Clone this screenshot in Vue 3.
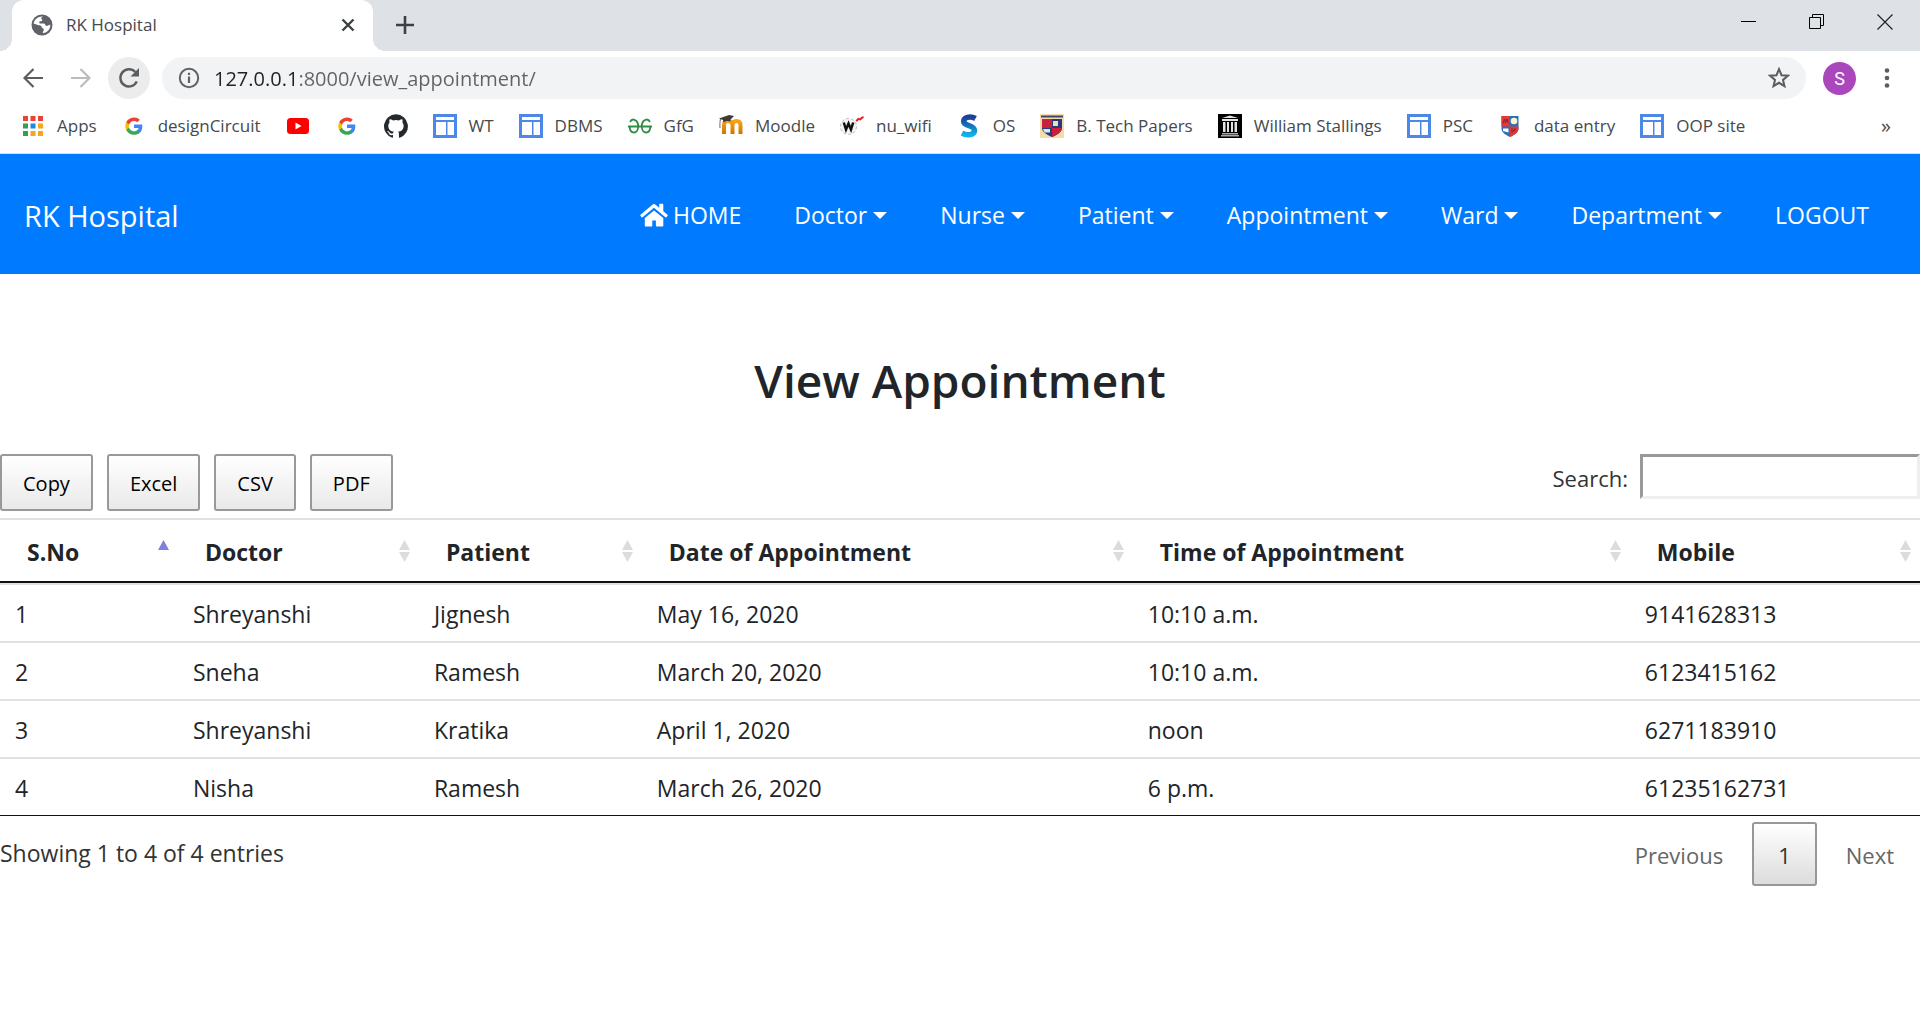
<script setup>
import { ref } from 'vue'

const address = ref('127.0.0.1:8000/view_appointment/')
const query = ref('')

const bookmarks = [
  { icon: 'apps', label: 'Apps' },
  { icon: 'google', label: 'designCircuit' },
  { icon: 'youtube', label: '', title: 'YouTube' },
  { icon: 'google', label: '', title: 'Google' },
  { icon: 'github', label: '', title: 'GitHub' },
  { icon: 'site', label: 'WT' },
  { icon: 'site', label: 'DBMS' },
  { icon: 'gfg', label: 'GfG' },
  { icon: 'moodle', label: 'Moodle' },
  { icon: 'wifi', label: 'nu_wifi' },
  { icon: 'snake', label: 'OS' },
  { icon: 'crest', label: 'B. Tech Papers' },
  { icon: 'archive', label: 'William Stallings' },
  { icon: 'site', label: 'PSC' },
  { icon: 'shield', label: 'data entry' },
  { icon: 'site', label: 'OOP site' },
]

const menus = ['Doctor', 'Nurse', 'Patient', 'Appointment', 'Ward', 'Department']
const exportsList = ['Copy', 'Excel', 'CSV', 'PDF']
const columns = ['S.No', 'Doctor', 'Patient', 'Date of Appointment', 'Time of Appointment', 'Mobile']
const rows = [
  ['1', 'Shreyanshi', 'Jignesh', 'May 16, 2020', '10:10 a.m.', '9141628313'],
  ['2', 'Sneha', 'Ramesh', 'March 20, 2020', '10:10 a.m.', '6123415162'],
  ['3', 'Shreyanshi', 'Kratika', 'April 1, 2020', 'noon', '6271183910'],
  ['4', 'Nisha', 'Ramesh', 'March 26, 2020', '6 p.m.', '61235162731'],
]
</script>

<template>
  <div class="window">
    <svg class="sprite" aria-hidden="true">
      <defs>
        <linearGradient id="snakeFill" x1="0" y1="0" x2="0" y2="1">
          <stop offset="0" stop-color="#1d3f97" />
          <stop offset="0.5" stop-color="#1474bd" />
          <stop offset="1" stop-color="#10b4ea" />
        </linearGradient>
        <linearGradient id="moodleFill" x1="0" y1="0" x2="0" y2="1">
          <stop offset="0" stop-color="#f9a11b" />
          <stop offset="1" stop-color="#c9780a" />
        </linearGradient>
      </defs>
      <symbol id="apps" viewBox="0 0 24 24">
        <path fill="#ea4335" d="M2 2h5v5H2zM9.500 2h5v5h-5zM17 2h5v5h-5z" />
        <path fill="#34a04f" d="M2 9.500h5v5H2zM2 17h5v5H2z" />
        <path fill="#1e88e5" d="M9.500 9.500h5v5h-5z" />
        <path fill="#f4a71d" d="M17 9.500h5v5h-5zM9.500 17h5v5h-5zM17 17h5v5h-5z" />
      </symbol>
      <symbol id="google" viewBox="0 0 24 24">
        <g transform="translate(2.500 2.700) scale(.79)">
          <path fill="#4285f4" d="M22.560 12.250c0-.78-.07-1.530-.2-2.250H12v4.260h5.920a5.060 5.060 0 0 1-2.200 3.320v2.770h3.570c2.080-1.920 3.270-4.740 3.270-8.100z" />
          <path fill="#34a853" d="M12 23c2.970 0 5.460-.98 7.280-2.660l-3.570-2.770c-.98.66-2.230 1.060-3.710 1.060-2.860 0-5.290-1.930-6.160-4.530H2.180v2.840A11 11 0 0 0 12 23z" />
          <path fill="#fbbc05" d="M5.840 14.090a6.600 6.600 0 0 1 0-4.180V7.070H2.180a11 11 0 0 0 0 9.860l3.660-2.840z" />
          <path fill="#ea4335" d="M12 5.380c1.620 0 3.060.56 4.210 1.640l3.150-3.150A11 11 0 0 0 2.180 7.070l3.660 2.840C6.710 7.310 9.140 5.380 12 5.380z" />
        </g>
      </symbol>
      <symbol id="youtube" viewBox="0 0 24 24">
        <rect x="1" y="4" width="22" height="16" rx="3.500" fill="#f00" />
        <path fill="#fff" d="M9.500 8.600v6.800l6-3.400z" />
      </symbol>
      <symbol id="github" viewBox="0 0 24 24">
        <path fill="#24292e" d="M12 .3a12 12 0 0 0-3.800 23.380c.6.120.83-.26.83-.57L9 21.070c-3.340.72-4.040-1.610-4.040-1.610-.55-1.390-1.340-1.760-1.340-1.760-1.080-.74.090-.73.090-.73 1.200.09 1.830 1.240 1.830 1.240 1.080 1.830 2.810 1.300 3.500 1 .1-.78.420-1.310.76-1.610-2.670-.3-5.470-1.330-5.470-5.930 0-1.310.47-2.380 1.240-3.220-.14-.3-.54-1.520.1-3.180 0 0 1-.32 3.300 1.230a11.500 11.500 0 0 1 6 0c2.280-1.550 3.290-1.230 3.290-1.230.64 1.660.24 2.880.12 3.180a4.650 4.650 0 0 1 1.230 3.220c0 4.610-2.800 5.630-5.480 5.920.42.36.81 1.100.81 2.220l-.01 3.290c0 .31.2.69.82.57A12 12 0 0 0 12 .3" />
      </symbol>
      <symbol id="site" viewBox="0 0 24 24">
        <path fill="#4d87e8" d="M0 0h24v24H0z" />
        <path fill="#fff" d="M3 3h18v3H3zM3 8h10v13H3zM14.500 8H21v13h-6.500z" />
      </symbol>
      <symbol id="gfg" viewBox="0 0 24 24">
        <path fill="none" stroke="#2f8d46" stroke-width="1.800" d="M0 12.500h24M2 8c1-2 3-2.800 4.500-2.200 2.500.8 3.700 3.500 3.700 6.500 0 3.500-1.700 6.200-4.300 6.200S1.800 16.500 1.700 12.500M22 8c-1-2-3-2.800-4.500-2.200-2.500.8-3.700 3.500-3.700 6.500 0 3.500 1.700 6.200 4.300 6.200s4.100-2 4.200-6" />
      </symbol>
      <symbol id="moodle" viewBox="0 0 24 24">
        <path fill="none" stroke="url(#moodleFill)" stroke-width="4" d="M5 20V11c0-3 1.500-4 4-4s4.500 1 4.500 4v9M13.500 20V11c0-3 2-4 4-4s4 1 4 4v9" />
        <path fill="#3b3b3b" d="M0 4.500 10 1l5 1-3.500 3.500v2C9 6.500 6 7 4.500 8.500L4 6z" />
        <path fill="none" stroke="#666" d="M1.500 5C.8 8 .8 11 1 14" />
      </symbol>
      <symbol id="wifi" viewBox="0 0 24 24">
        <circle cx="8.500" cy="12.500" r="8" fill="#f4f4f4" stroke="#bbb" stroke-dasharray="3 2" />
        <path fill="none" stroke="#111" stroke-width="2.500" d="m3.800 8.500 2.200 7 2.500-6 2.500 6 2.200-7" />
        <path fill="#e02b2b" d="m15.500 6.500 2.500-2.800 1.500.5L23 2l1 1.500-3.500 3-1.800-.5-1.700 2z" />
      </symbol>
      <symbol id="snake" viewBox="0 0 24 24">
        <path fill="none" stroke="url(#snakeFill)" stroke-width="5.500" d="M18.500 4.500C13 1.500 6.500 3.500 6.700 7.500c.2 5 10.800 3.200 10.800 9 0 4.500-7.500 5.500-12.500 2.700" />
      </symbol>
      <symbol id="crest" viewBox="0 0 24 24">
        <path fill="#f3dcae" d="M0 0h24v24H0z" />
        <path fill="#44446b" d="M1 1.500h22v2H1z" />
        <path fill="#283a7c" d="M2 5h20v9c0 4-5 7-10 9-5-2-10-5-10-9z" />
        <path fill="#c9203b" d="M2 5h10v9H2zM12 14h10c0 4-5 7-10 9z" />
        <path fill="#f5dfa3" d="M13 7h5v5h-5z" />
        <path fill="#dce7f5" d="M3 15h7v3.500H4.500z" />
      </symbol>
      <symbol id="archive" viewBox="0 0 24 24">
        <path d="M0 0h24v24H0z" />
        <path fill="#e4e4e4" d="m12 1.500 8 2.500H4zM4 5h16v2H4zM5 8h2.500v10H5zM9 8h2v10H9zM13 8h2v10h-2zM16.500 8H19v10h-2.500z" />
        <path fill="#aaa" d="M4 19h16v1.500H4zM3 21h18v1.500H3z" />
      </symbol>
      <symbol id="shield" viewBox="0 0 24 24">
        <path fill="#2c6fb8" d="M3.500 2h17v13c0 3-4 6-8.500 8-4.500-2-8.500-5-8.500-8z" />
        <path fill="#e23a36" d="M3.500 2H12v10.500H3.500zM12 12.500h8.500V15c0 3-4 6-8.500 8z" />
        <circle cx="16" cy="7" r="3.300" fill="#fbf3d0" />
        <path fill="#fff" d="M5 14.500h5.500v4L5 17z" />
        <path fill="none" stroke="#812832" d="M5 9.500 6.500 5l1 4L9 5l1.500 4.500M14 14v4.500l3-4v3" />
      </symbol>
    </svg>

    <header class="browser">
      <div class="tabstrip">
        <div class="tab">
          <svg class="favicon" viewBox="0 0 22 22" aria-hidden="true">
            <circle cx="11" cy="11" r="10.500" fill="#5f6368" />
            <path fill="#fff" d="M12 2.500c-2 1-2.300 2-1 3 .8.800-.2 2-1.700 1.800-1.300-.2-1.200 1.400-.6 2.200h4.300c1.500 0 1 2.500 2.600 2.500 1.500 0 1.300-1.300 3.700-1.300.3 4-2.700 7.700-7.300 8.500-.8-1.200 1-2 .8-3.700-.1-1.200-2-1-2.200-2.500-.1-1.300-1.200-1.800-3-1.800L2.600 9.500C3.400 5.300 7.500 2 12 2.500z" />
          </svg>
          <span class="tab-title">RK Hospital</span>
          <button class="plain" type="button" aria-label="Close tab">
            <svg width="14" height="14" viewBox="0 0 14 14"><path d="m1.500 1.500 11 11m0-11-11 11" fill="none" stroke="#3c4043" stroke-width="2.400" /></svg>
          </button>
        </div>
        <button class="plain new-tab" type="button" aria-label="New tab">
          <svg width="18" height="18" viewBox="0 0 18 18"><path d="M9 0v18M0 9h18" stroke="#3c4043" stroke-width="2.600" /></svg>
        </button>
        <div class="window-controls">
          <button class="plain" type="button" aria-label="Minimize">
            <svg width="16" height="16" viewBox="0 0 16 16"><path d="M0 7.500h15" stroke="#000" /></svg>
          </button>
          <button class="plain" type="button" aria-label="Restore">
            <svg width="16" height="16" viewBox="0 0 16 16"><path d="M.5 3.500h11v11H.5zM3.500 3.500v-3h11v11h-3" fill="none" stroke="#000" /></svg>
          </button>
          <button class="plain" type="button" aria-label="Close window">
            <svg width="16" height="16" viewBox="0 0 16 16"><path d="m.5.5 15 15m0-15-15 15" stroke="#222" stroke-width="1.200" /></svg>
          </button>
        </div>
      </div>

      <div class="toolbar">
        <button class="plain round" type="button" aria-label="Back">
          <svg width="20" height="20" viewBox="0 0 20 20"><path d="M20 10H2M10.500 1 1.500 10l9 9" fill="none" stroke="#5a5d61" stroke-width="2.200" /></svg>
        </button>
        <button class="plain round" type="button" aria-label="Forward">
          <svg width="20" height="20" viewBox="0 0 20 20"><path d="M0 10h18M9.500 1l9 9-9 9" fill="none" stroke="#bbbcbe" stroke-width="2.200" /></svg>
        </button>
        <button class="plain round shaded" type="button" aria-label="Reload">
          <svg width="22" height="22" viewBox="0 0 22 22"><path d="M18.800 14.500A8.600 8.600 0 1 1 17.300 5" fill="none" stroke="#5a5d61" stroke-width="2.400" /><path d="M21 1v8.500h-8.500z" fill="#5a5d61" /></svg>
        </button>
        <div class="omnibox">
          <svg width="22" height="22" viewBox="0 0 22 22" aria-hidden="true"><circle cx="11" cy="11" r="9.200" fill="none" stroke="#5f6368" stroke-width="2" /><path d="M11 9.500v6.500M11 5.800v2.200" stroke="#5f6368" stroke-width="2.200" /></svg>
          <input v-model="address" class="address" type="text" aria-label="Address" />
          <button class="plain" type="button" aria-label="Bookmark this page">
            <svg width="22" height="22" viewBox="0 0 22 22"><path d="m11 2.200 2.500 6 6.400.5-4.900 4.200 1.500 6.300-5.500-3.400-5.500 3.400L7 12.900 2.100 8.700l6.400-.5z" fill="none" stroke="#5a5d61" stroke-width="2" /></svg>
          </button>
        </div>
        <button class="plain avatar" type="button" aria-label="Profile">S</button>
        <button class="plain more" type="button" aria-label="Menu">
          <svg width="6" height="20" viewBox="0 0 6 20"><g fill="#5a5d61"><circle cx="3" cy="2.500" r="2.300" /><circle cx="3" cy="10" r="2.300" /><circle cx="3" cy="17.500" r="2.300" /></g></svg>
        </button>
      </div>

      <nav class="bookmarks" aria-label="Bookmarks">
        <a v-for="(b, i) in bookmarks" :key="i" class="bookmark" href="#" :title="b.title">
          <svg class="bookmark-icon" aria-hidden="true"><use :href="'#' + b.icon" /></svg>
          <span v-if="b.label" class="bookmark-label">{{ b.label }}</span>
        </a>
        <button class="plain overflow" type="button" aria-label="More bookmarks">»</button>
      </nav>
    </header>

    <nav class="navbar">
      <a class="brand" href="#">RK Hospital</a>
      <div class="menu">
        <a class="menu-link home" href="#">
          <svg width="28" height="24" viewBox="0 0 28 24" aria-hidden="true">
            <path fill="#fff" d="M14 7.400 4.800 15v7.400c0 .6.400 1 1 1H11.500c.5 0 .8-.4.800-.9v-5h3.600v5c0 .5.300.9.800.9h5.600c.6 0 1-.4 1-1V15z" />
            <path fill="#fff" d="M27.500 11.700 23.300 8.200V1.500c0-.4-.3-.7-.7-.7h-2.700c-.4 0-.7.3-.7.700v3.300L15.600 1.700a2.500 2.500 0 0 0-3.200 0L.5 11.700c-.3.200-.3.700-.1 1l1.200 1.500c.3.300.7.300 1 .1L13.400 5.300c.4-.3.800-.3 1.200 0l10.800 9c.3.200.7.200 1-.1l1.200-1.500c.2-.3.200-.8-.1-1z" />
          </svg>
          HOME
        </a>
        <a v-for="m in menus" :key="m" class="menu-link dropdown" href="#">{{ m }}</a>
        <a class="menu-link" href="#">LOGOUT</a>
      </div>
    </nav>

    <main>
      <h1>View Appointment</h1>

      <div class="table-tools">
        <div class="exports">
          <button v-for="e in exportsList" :key="e" class="export" type="button">{{ e }}</button>
        </div>
        <div class="search">
          <label for="search">Search:</label>
          <input id="search" v-model="query" type="search" />
        </div>
      </div>

      <table>
        <colgroup>
          <col v-for="(c, i) in columns" :key="c" :class="'col-' + i" />
        </colgroup>
        <thead>
          <tr>
            <th v-for="(c, i) in columns" :key="c" scope="col" :aria-sort="i ? 'none' : 'ascending'">
              <div class="heading">
                <span class="heading-text">{{ c }}</span>
                <svg v-if="i" width="11" height="22" viewBox="0 0 11 22" aria-hidden="true"><path d="M5.500 0 11 10H0zM0 12h11L5.500 22z" fill="#dcdcdc" /></svg>
                <svg v-else width="11" height="22" viewBox="0 0 11 22" aria-hidden="true"><path d="M5.500 0 11 10H0z" fill="#7f80dc" /></svg>
              </div>
            </th>
          </tr>
        </thead>
        <tbody>
          <tr v-for="r in rows" :key="r[0]">
            <td v-for="(v, i) in r" :key="i">{{ v }}</td>
          </tr>
        </tbody>
      </table>

      <div class="table-footer">
        <p>Showing 1 to 4 of 4 entries</p>
        <div class="pager">
          <button class="page" type="button">Previous</button>
          <button class="page current" type="button" aria-current="page">1</button>
          <button class="page" type="button">Next</button>
        </div>
      </div>
    </main>
  </div>
</template>

<style>
body {
  margin: 0;
  background: #fff;
}
</style>

<style scoped>
.window {
  font-family: "Open Sans", "Noto Sans", sans-serif;
  font-size: 23px;
  color: #212529;
}
* {
  box-sizing: border-box;
}
.sprite {
  position: absolute;
  width: 0;
  height: 0;
}
a {
  color: inherit;
  text-decoration: none;
}
button,
input {
  font: inherit;
  color: inherit;
}
.plain {
  display: flex;
  align-items: center;
  justify-content: center;
  padding: 0;
  border: 0;
  background: none;
}

/* Browser frame */
.browser {
  border-bottom: 1px solid #dadce0;
}
.tabstrip {
  display: flex;
  align-items: center;
  height: 51px;
  padding-left: 12px;
  background: #dee1e6;
}
.tab {
  position: relative;
  display: flex;
  align-items: center;
  align-self: stretch;
  width: 361px;
  padding: 0 18px 2px 19px;
  border-radius: 12px 12px 0 0;
  background: #fff;
}
.tab::before,
.tab::after {
  content: "";
  position: absolute;
  bottom: 0;
  width: 12px;
  height: 12px;
}
.tab::before {
  right: 100%;
  background: radial-gradient(circle at 0 0, transparent 12px, #fff 12px);
}
.tab::after {
  left: 100%;
  background: radial-gradient(circle at 100% 0, transparent 12px, #fff 12px);
}
.favicon {
  width: 22px;
  height: 22px;
  margin-right: 13px;
}
.tab-title {
  flex: 1;
  font-size: 17px;
  color: #45494d;
}
.new-tab {
  margin-left: 23px;
  padding-bottom: 2px;
}
.window-controls {
  display: flex;
  gap: 52px;
  margin-left: auto;
  padding: 0 27px 8px 0;
}
.toolbar {
  display: flex;
  align-items: center;
  height: 54px;
  padding: 0 30px 0 12px;
}
.round {
  width: 42px;
  height: 42px;
  margin-right: 6px;
  border-radius: 50%;
}
.shaded {
  margin-right: 12px;
  background: #ececed;
}
.omnibox {
  display: flex;
  flex: 1;
  align-items: center;
  height: 42px;
  padding: 0 16px;
  border-radius: 21px;
  background: #f1f3f4;
}
.address {
  flex: 1;
  min-width: 0;
  padding: 0;
  margin-left: 14px;
  border: 0;
  outline: 0;
  font-size: 20px;
  color: #5f6368;
  background: linear-gradient(90deg, #202124 83px, #5f6368 83px);
  background-clip: text;
  -webkit-text-fill-color: transparent;
}
.avatar {
  width: 33px;
  height: 33px;
  margin: 0 28px 0 17px;
  border-radius: 50%;
  background: #ab47bc;
  color: #fff;
  font-family: Roboto, sans-serif;
  font-size: 18px;
}
.bookmarks {
  display: flex;
  align-items: center;
  gap: 25px;
  height: 48px;
  padding: 0 29px 6px 21px;
  font-size: 17px;
  color: #45494d;
  white-space: nowrap;
}
.bookmark {
  display: flex;
  align-items: center;
  gap: 12px;
}
.bookmark-icon {
  width: 24px;
  height: 24px;
}
.bookmark-label {
  padding-bottom: 2px;
}
.overflow {
  margin-left: auto;
  padding-bottom: 2px;
  font-size: 20px;
}

/* Site navigation */
.navbar {
  display: flex;
  align-items: center;
  justify-content: space-between;
  height: 120px;
  padding: 2px 51px 0 24px;
  background: #007bff;
  color: #fff;
}
.brand {
  font-size: 29px;
}
.menu {
  display: flex;
  gap: 53px;
}
.menu-link {
  display: flex;
  align-items: center;
}
.home {
  gap: 5px;
}
.dropdown::after {
  content: "";
  margin-left: 6px;
  border: 7px solid transparent;
  border-top-color: #fff;
  border-bottom: 0;
}

/* Appointment list */
h1 {
  margin: 72px 0 40px;
  font-size: 46px;
  font-weight: 600;
  line-height: 68px;
  text-align: center;
}
.table-tools {
  display: flex;
  align-items: flex-start;
  justify-content: space-between;
  height: 64px;
}
.exports {
  display: flex;
  gap: 14px;
}
.export {
  height: 57px;
  padding: 2px 21px 0;
  border: 2px solid #999;
  border-radius: 3px;
  background: linear-gradient(#fff, #e9e9e9);
  font-size: 20px;
  color: #000;
}
.search {
  display: flex;
  align-items: center;
  gap: 12px;
  font-size: 22px;
  color: #333;
}
.search label {
  padding-top: 2px;
}
.search input {
  width: 280px;
  height: 45px;
  border: 3px solid;
  border-color: #999 #eee #eee #999;
  background: #fff;
}
table {
  width: 100%;
  table-layout: fixed;
  border-spacing: 0;
  border-bottom: 1px solid #111;
}
.col-0 { width: 9.27%; }
.col-1 { width: 12.55%; }
.col-2 { width: 11.61%; }
.col-3 { width: 25.57%; }
.col-4 { width: 25.89%; }
.col-5 { width: 15.11%; }
th {
  height: 65px;
  padding: 0 9px 0 27px;
  border-top: 2px solid #dee2e6;
  border-bottom: 2px solid #111;
  font-weight: 700;
  text-align: left;
}
.heading {
  display: flex;
  align-items: center;
  justify-content: space-between;
}
.heading-text {
  padding-top: 2px;
}
td {
  height: 58px;
  padding: 2px 15px 0;
  border-top: 2px solid #dee2e6;
}
.table-footer {
  display: flex;
  align-items: flex-start;
  justify-content: space-between;
  padding-top: 6px;
  color: #333;
}
.table-footer p {
  margin: 0;
  line-height: 62px;
}
.pager {
  display: flex;
  gap: 3px;
}
.page {
  height: 64px;
  padding: 2px 24px 0;
  border: 2px solid transparent;
  border-radius: 3px;
  background: none;
  font-size: 22px;
  color: #666;
}
.current {
  border-color: #979797;
  background: linear-gradient(#fff, #dcdcdc);
  color: #333;
}
</style>
